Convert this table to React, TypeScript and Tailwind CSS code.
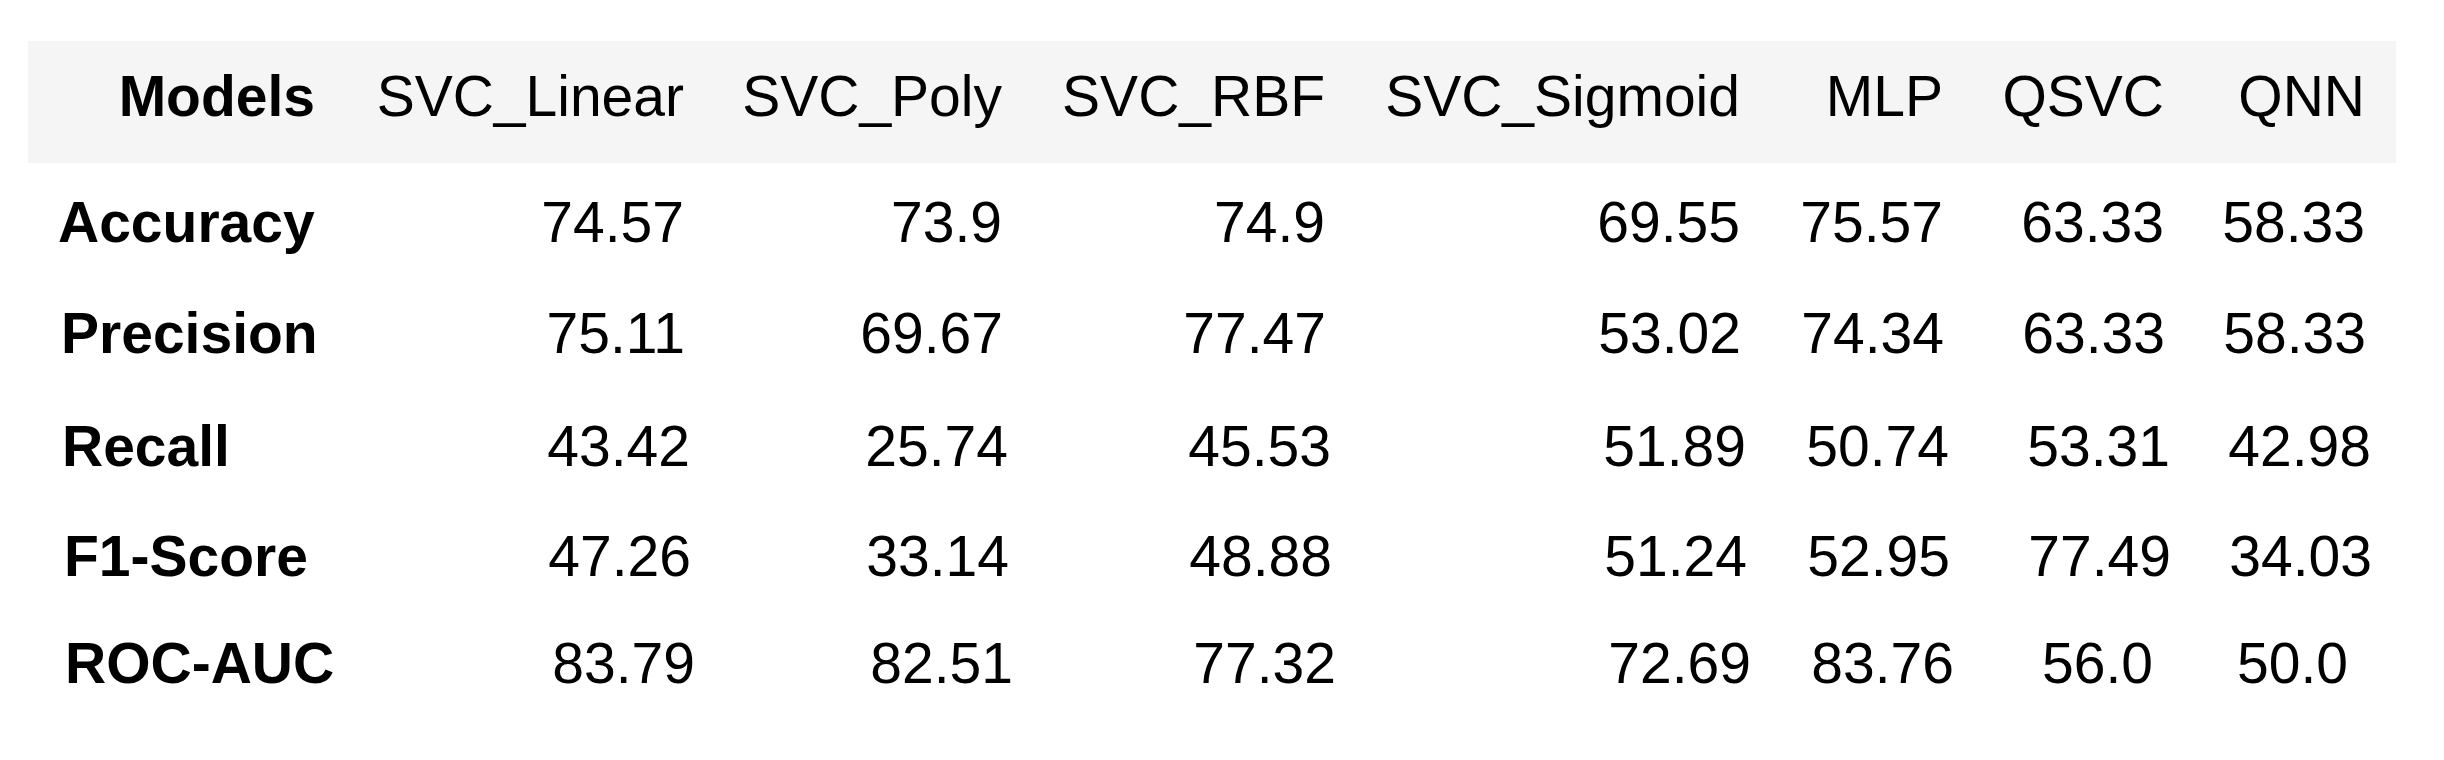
import React from "react";

const headers = ["SVC_Linear", "SVC_Poly", "SVC_RBF", "SVC_Sigmoid", "MLP", "QSVC", "QNN"];

// each row has a tiny drift to the right, like the scanned table
const rows = [
  { label: "Accuracy", values: ["74.57", "73.9", "74.9", "69.55", "75.57", "63.33", "58.33"], row: "h-[111px] ml-[0px]", lbl: "pl-[30px]" },
  { label: "Precision", values: ["75.11", "69.67", "77.47", "53.02", "74.34", "63.33", "58.33"], row: "h-[111px] ml-[1px]", lbl: "pl-[32px]" },
  { label: "Recall", values: ["43.42", "25.74", "45.53", "51.89", "50.74", "53.31", "42.98"], row: "h-[114px] ml-[6px]", lbl: "pl-[28px]" },
  { label: "F1-Score", values: ["47.26", "33.14", "48.88", "51.24", "52.95", "77.49", "34.03"], row: "h-[106px] ml-[7px]", lbl: "pl-[29px]" },
  { label: "ROC-AUC", values: ["83.79", "82.51", "77.32", "72.69", "83.76", "56.0", "50.0"], row: "h-[108px] ml-[11px]", lbl: "pl-[26px]" },
];

const cols = "grid grid-cols-[287px_369px_318px_323px_415px_203px_221px_201px]";

function cellPad(label: string, i: number) {
  if (label === "ROC-AUC" && i === 5) return "pr-[22px]";
  if (label === "ROC-AUC" && i === 6) return "pr-[28px]";
  return "";
}

export default function App() {
  return (
    <div className="w-[2444px] h-[760px] bg-white text-black font-['Liberation_Sans',Arial,sans-serif] text-[57px] leading-none pt-[41px]">
      {/* Header band */}
      <div className="ml-[28px] w-[2368px] bg-[#f5f5f5] pt-[27px] pb-[38px]">
        <div className={cols}>
          <div className="text-right font-bold">Models</div>
          {headers.map((h) => (
            <div key={h} className="text-right whitespace-nowrap">
              {h}
            </div>
          ))}
        </div>
      </div>

      {/* Body */}
      <div className="ml-[28px] pt-[4px]">
        {rows.map((r) => (
          <div key={r.label} className={`${cols} items-center ${r.row}`}>
            <div className={`font-bold whitespace-nowrap ${r.lbl}`}>{r.label}</div>
            {r.values.map((v, i) => (
              <div key={i} className={`text-right ${cellPad(r.label, i)}`}>
                {v}
              </div>
            ))}
          </div>
        ))}
      </div>
    </div>
  );
}
